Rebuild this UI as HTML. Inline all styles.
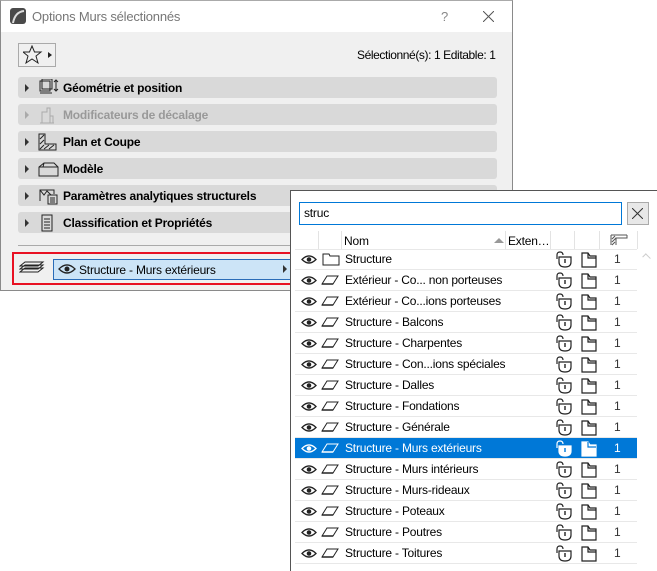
<!DOCTYPE html>
<html><head><meta charset="utf-8"><style>
body{margin:0;width:657px;height:570px;background:#fff;position:relative;overflow:hidden;font-family:"Liberation Sans",sans-serif;font-size:12px;color:#000;letter-spacing:-0.2px}
.abs{position:absolute}
#dlg{left:0;top:0;width:511px;height:289px;border:1px solid #8a8a8a;border-top-color:#aaa;background:#f0f0f0}
#title{left:0;top:0;width:511px;height:31px;background:#fff}
.panel{position:absolute;left:17px;width:479px;height:21px;background:#d9d9d9;border-radius:3px;font-weight:bold;font-size:12px}
.panel .t{position:absolute;left:45px;top:4px}
.panel .ar{position:absolute;left:7px;top:7px;width:0;height:0;border-left:4px solid #333;border-top:4px solid transparent;border-bottom:4px solid transparent}
#pop{left:290px;top:190px;width:366px;height:380px;border:1px solid #555;border-bottom:none;background:#fff}
.row{position:absolute;left:4px;width:342px;height:20px;border-bottom:1px solid #e8e8e8;font-size:12px}
.row .n{position:absolute;left:50px;top:3px;white-space:nowrap}
.row .c{position:absolute;left:319px;top:3px;color:#333}
.sel{background:#0078d7;color:#fff}
.sel .c{color:#fff}
svg{position:absolute}
</style></head><body>
<div id="dlg" class="abs">
 <div id="title" class="abs">
  <svg style="left:9px;top:7px" width="16" height="16"><rect x="0" y="0" width="16" height="16" rx="3" fill="#4a4a4a"/><path d="M3 15 Q5 4 14 3" stroke="#ddd" stroke-width="2" fill="none"/></svg>
  <div class="abs" style="left:31px;top:8px;font-size:13px;color:#777">Options Murs sélectionnés</div>
  <div class="abs" style="left:440px;top:8px;font-size:13px;color:#888">?</div>
  <svg style="left:482px;top:10px" width="11" height="11"><path d="M0 0L11 11M11 0L0 11" stroke="#555" stroke-width="1"/></svg>
 </div>
 <div class="abs" style="left:17px;top:42px;width:36px;height:22px;border:1px solid #aaa;background:#f0f0f0"></div>
 <svg style="left:22px;top:44px" width="30" height="20"><path d="M9 1L11.5 7H18L13 11L15 18L9 14L3 18L5 11L0 7H6.5Z" fill="none" stroke="#222" stroke-width="1"/><path d="M25 7L29 10L25 13Z" fill="#222"/></svg>
 <div class="abs" style="left:356px;top:47px;font-size:12px;letter-spacing:-0.4px">Sélectionné(s): 1 Editable: 1</div>
 <div class="panel" style="top:76px"><div class="ar"></div><svg style="left:20px;top:2px" width="22" height="18"><rect x="2" y="2" width="10" height="10" fill="none" stroke="#222"/><rect x="4" y="0" width="10" height="10" fill="none" stroke="#222"/><path d="M2 14H14M18 1V12M16 3L18 1L20 3M16 10L18 12L20 10" stroke="#222" fill="none"/></svg><span class="t">Géométrie et position</span></div>
 <div class="panel" style="top:103px;color:#999"><div class="ar" style="border-left-color:#aaa"></div><svg style="left:20px;top:2px" width="22" height="18"><path d="M4 17V6H9V2H12V17M2 17H16M12 10H15V17" stroke="#aaa" fill="none"/></svg><span class="t">Modificateurs de décalage</span></div>
 <div class="panel" style="top:130px"><div class="ar"></div><svg style="left:20px;top:2px" width="22" height="18"><path d="M1 1V17H18V11H7V1Z" fill="none" stroke="#222"/><path d="M2 6L6 2M2 11L6 7M2 16L6 12M6 16L11 12M11 16L16 12" stroke="#222"/></svg><span class="t">Plan et Coupe</span></div>
 <div class="panel" style="top:157px"><div class="ar"></div><svg style="left:20px;top:2px" width="22" height="18"><path d="M1 7L6 3H16L20 7V16H1ZM1 7H20M6 3L5 7" fill="none" stroke="#222"/></svg><span class="t">Modèle</span></div>
 <div class="panel" style="top:184px"><div class="ar"></div><svg style="left:20px;top:2px" width="22" height="18"><path d="M2 14V3H16V7M2 3L6 8L9 4L13 8" fill="none" stroke="#222"/><rect x="10" y="8" width="9" height="9" fill="#d9d9d9" stroke="#222"/><path d="M12 11H17M12 13H17M12 15H17" stroke="#222"/></svg><span class="t">Paramètres analytiques structurels</span></div>
 <div class="panel" style="top:211px"><div class="ar"></div><svg style="left:20px;top:2px" width="22" height="18"><path d="M4 1H14V17H4Z" fill="none" stroke="#222"/><path d="M6 5H12M6 8H12M6 11H12M6 14H12" stroke="#222"/></svg><span class="t">Classification et Propriétés</span></div>
 <div class="abs" style="left:17px;top:244px;width:479px;height:1px;background:#aaa"></div>
 <div class="abs" style="left:11px;top:251px;width:279px;height:29px;border:2px solid #e81123"></div>
 <svg style="left:18px;top:259px" width="26" height="16"><path d="M1 12L6 8H24L19 12ZM1 9L6 5H24L19 9ZM1 6L6 2H24L19 6Z" fill="#f0f0f0" stroke="#222"/></svg>
 <div class="abs" style="left:52px;top:258px;width:236px;height:19px;border:1px solid #2a6cb8;background:#cce4f7"></div>
 <svg style="left:57px;top:262px" width="18" height="12"><path d="M1 6Q9 -2 17 6Q9 14 1 6Z" fill="none" stroke="#222" stroke-width="1.3"/><circle cx="9" cy="6" r="2.5" fill="#222"/></svg>
 <div class="abs" style="left:78px;top:262px;font-size:12px">Structure - Murs extérieurs</div>
 <div class="abs" style="left:282px;top:264px;border-left:4px solid #333;border-top:4px solid transparent;border-bottom:4px solid transparent"></div>
</div>
<div id="pop" class="abs">
 <div class="abs" style="left:8px;top:11px;width:321px;height:21px;border:1px solid #0078d7"></div>
 <div class="abs" style="left:13px;top:15px;font-size:12px">struc</div>
 <div class="abs" style="left:336px;top:11px;width:20px;height:21px;border:1px solid #aaa;background:#e8e8e8"></div>
 <svg style="left:341px;top:17px" width="11" height="11"><path d="M0 0L11 11M11 0L0 11" stroke="#333"/></svg>
 <div class="abs" style="left:4px;top:40px;width:342px;height:18px;border-bottom:1px solid #e8e8e8"></div>
 <div class="abs" style="left:27px;top:40px;width:1px;height:18px;background:#e3e3e3"></div>
 <div class="abs" style="left:50px;top:40px;width:1px;height:18px;background:#e3e3e3"></div>
 <div class="abs" style="left:214px;top:40px;width:1px;height:18px;background:#e3e3e3"></div>
 <div class="abs" style="left:259px;top:40px;width:1px;height:18px;background:#e3e3e3"></div>
 <div class="abs" style="left:283px;top:40px;width:1px;height:18px;background:#e3e3e3"></div>
 <div class="abs" style="left:308px;top:40px;width:1px;height:18px;background:#e3e3e3"></div>
 <div class="abs" style="left:346px;top:40px;width:1px;height:18px;background:#e3e3e3"></div>
 <div class="abs" style="left:53px;top:43px;font-size:12px">Nom</div>
 <div class="abs" style="left:203px;top:47px;border-bottom:5px solid #999;border-left:5px solid transparent;border-right:5px solid transparent"></div>
 <div class="abs" style="left:217px;top:43px;font-size:12px">Exten…</div>
 <svg style="left:319px;top:43px" width="18" height="12"><path d="M1 1H17M1 1V11M17 1V4H6V11" fill="none" stroke="#555"/><path d="M2 5L5 2M2 8L6 4M2 11L5 8" stroke="#555"/></svg>
 <div class="abs" style="left:352px;top:64px;width:6px;height:4px;border-top:1px solid #ccc;border-left:1px solid #ccc;transform:rotate(45deg)"></div>
 <div id="rows"></div>
</div>
<script>
var names=["Structure","Extérieur - Co... non porteuses","Extérieur - Co...ions porteuses","Structure - Balcons","Structure - Charpentes","Structure - Con...ions spéciales","Structure - Dalles","Structure - Fondations","Structure - Générale","Structure - Murs extérieurs","Structure - Murs intérieurs","Structure - Murs-rideaux","Structure - Poteaux","Structure - Poutres","Structure - Toitures"];
var h="";
names.forEach(function(n,i){
 var s=i==9,col=s?"#fff":"#222";
 var icon=i==0?'<svg style="left:27px;top:3px" width="18" height="14"><path d="M1 2H7L8 4H17V13H1Z" fill="none" stroke="'+col+'"/></svg>'
 :'<svg style="left:26px;top:5px" width="18" height="10"><path d="M1 9L6 1H17L12 9Z" fill="none" stroke="'+col+'"/><path d="M1 9H12" stroke="'+col+'" stroke-width="1.5"/></svg>';
 h+='<div class="row'+(s?' sel':'')+'" style="top:'+(58+i*21)+'px">'
 +'<svg style="left:6px;top:5px" width="16" height="11"><path d="M1 5.5Q8 -1.5 15 5.5Q8 12.5 1 5.5Z" fill="none" stroke="'+col+'" stroke-width="1.3"/><circle cx="8" cy="5.5" r="2.3" fill="'+col+'"/></svg>'
 +icon+'<span class="n">'+n+'</span>'
 +'<svg style="left:261px;top:2px" width="16" height="17"><path d="M1 8V4Q1 1 4 1Q7 1 7 4" fill="none" stroke="'+col+'" stroke-width="1.2"/><path d="M3 6H15V11Q15 16 9 16Q3 16 3 11Z" fill="'+(s?'#fff':'none')+'" stroke="'+col+'" stroke-width="1.2"/><path d="M9 8V12" stroke="'+(s?'#0078d7':col)+'" stroke-width="1.4"/></svg>'
 +'<svg style="left:286px;top:3px" width="16" height="16"><path d="M1 1H7L9 4H15V15H1Z" fill="'+(s?'#fff':'none')+'" stroke="'+col+'" stroke-width="1.2"/><path d="M7 1V6H15" fill="none" stroke="'+(s?'#0078d7':col)+'" stroke-width="1.2"/></svg>'
 +'<span class="c">1</span></div>';
});
document.getElementById("rows").innerHTML=h;
</script>
</body></html>
